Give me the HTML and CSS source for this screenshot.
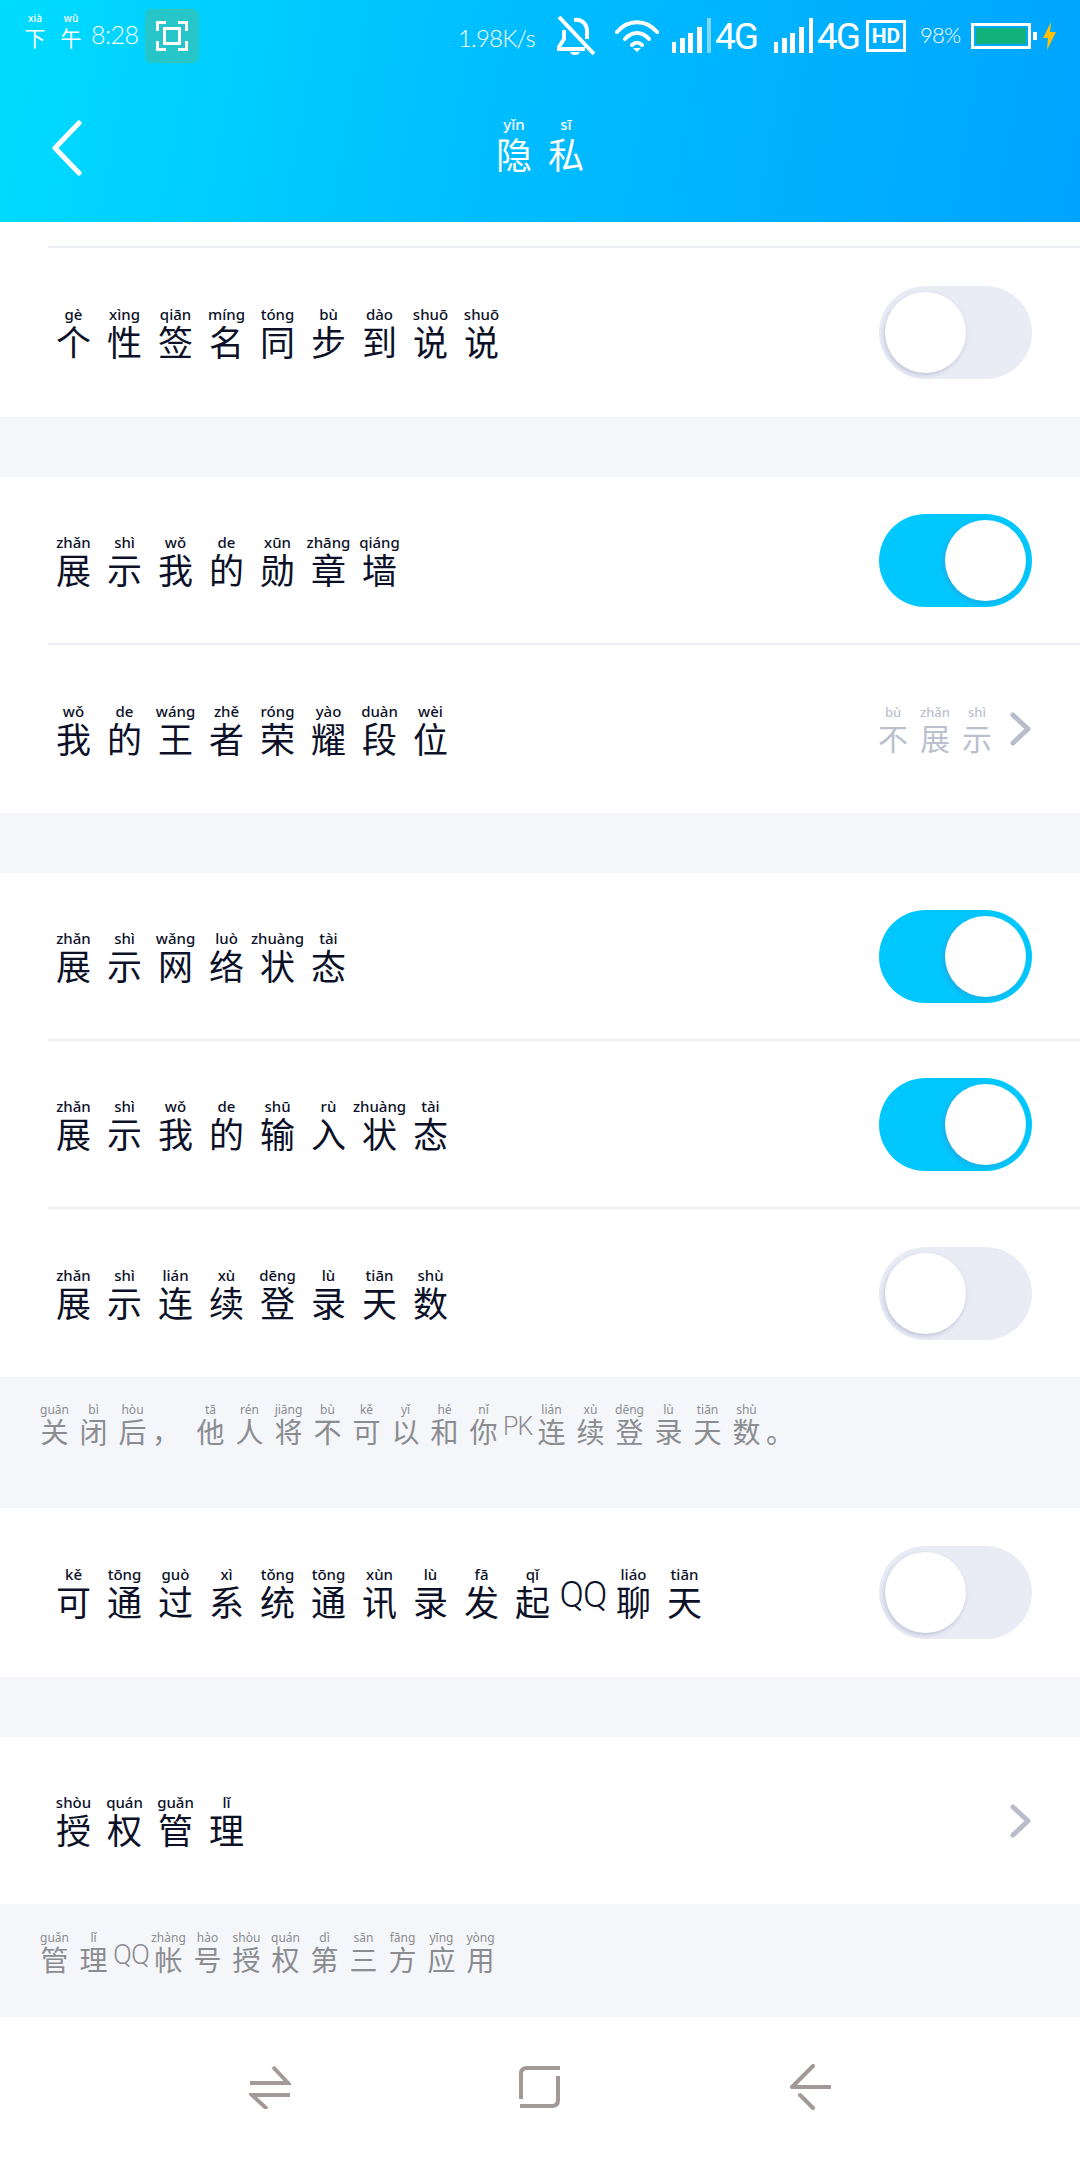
FILE: index.html
```html
<!DOCTYPE html>
<html lang="zh-CN">
<head>
    <meta charset="UTF-8">
    <meta name="viewport" content="width=device-width, initial-scale=1.0">
    <title>隐私</title>
    <link rel="stylesheet" href="styles.css">
</head>
<body>
    <header class="header">
        <div class="status-bar">
            <div class="status-left">
                <div class="line line-status">
                    <ruby>下<rt>xià</rt></ruby>
                    <ruby>午<rt>wǔ</rt></ruby>
                </div>
                <span class="clock">8:28</span>
                <div class="scan-badge">
                    <svg width="32" height="30" viewBox="0 0 32 30" fill="none" stroke="#fff" stroke-width="3">
                        <path d="M1.500 10V1.500H10M22 1.500H30.500V10M30.500 20V28.500H22M10 28.500H1.500V20"/>
                        <rect x="8.500" y="7.500" width="15" height="15"/>
                    </svg>
                </div>
            </div>
            <div class="status-right">
                <span class="speed">1.98K/s</span>
                <svg class="icon-bell" width="38" height="40" viewBox="0 0 38 40" fill="none" stroke="#fff" stroke-width="4">
                    <path d="M2 1L37 38"/>
                    <path d="M7 14V23L2 31V33H28"/>
                    <path d="M17 4C25 3 30 8 30 15V23"/>
                    <path d="M13 36H23C22 40 14 40 13 36Z" fill="#fff" stroke="none"/>
                </svg>
                <svg class="icon-wifi" width="44" height="33" viewBox="0 0 44 33" fill="none" stroke="#fff" stroke-width="4" stroke-linecap="round">
                    <path d="M2 13C13 0 31 0 42 13"/>
                    <path d="M10 20C17 12 27 12 34 20"/>
                    <path d="M17 26C20 23 24 23 27 26"/>
                    <path d="M18 29H26L22 33Z" fill="#fff" stroke="none"/>
                </svg>
                <svg class="icon-signal" width="39" height="35" viewBox="0 0 39 35" fill="#fff">
                    <rect x="0" y="24" width="4" height="11"/>
                    <rect x="8" y="20" width="5" height="15"/>
                    <rect x="16" y="15" width="5" height="20"/>
                    <rect x="25" y="9" width="5" height="26"/>
                    <rect x="35" y="0" width="4" height="35" opacity="0.5"/>
                </svg>
                <span class="net">4G</span>
                <svg class="icon-signal icon-signal-2" width="39" height="35" viewBox="0 0 39 35" fill="#fff">
                    <rect x="0" y="24" width="4" height="11"/>
                    <rect x="8" y="20" width="5" height="15"/>
                    <rect x="16" y="15" width="5" height="20"/>
                    <rect x="25" y="9" width="5" height="26"/>
                    <rect x="35" y="0" width="4" height="35"/>
                </svg>
                <span class="net">4G</span>
                <span class="hd">HD</span>
                <span class="battery-pct">98%</span>
                <div class="battery">
                    <div class="battery-body"><div class="battery-fill"></div></div>
                    <div class="battery-nub"></div>
                </div>
                <svg class="icon-bolt" width="13" height="28" viewBox="0 0 13 28" fill="#ffc107">
                    <path d="M8 0L0 16H5L4 28L13 10H7Z"/>
                </svg>
            </div>
        </div>
        <div class="title-bar">
            <svg class="back" width="30" height="56" viewBox="0 0 30 56" fill="none" stroke="#fff" stroke-width="5" stroke-linecap="round" stroke-linejoin="round">
                <path d="M27 3L3 28L27 53"/>
            </svg>
            <h1 class="line line-title">
                <ruby>隐<rt>yǐn</rt></ruby>
                <ruby>私<rt>sī</rt></ruby>
            </h1>
        </div>
    </header>

    <main>
        <div class="strip"></div>
        <div class="divider"></div>
        <div class="row row-first">
            <div class="line">
                <ruby>个<rt>gè</rt></ruby><ruby>性<rt>xìng</rt></ruby><ruby>签<rt>qiān</rt></ruby><ruby>名<rt>míng</rt></ruby><ruby>同<rt>tóng</rt></ruby><ruby>步<rt>bù</rt></ruby><ruby>到<rt>dào</rt></ruby><ruby>说<rt>shuō</rt></ruby><ruby>说<rt>shuō</rt></ruby>
            </div>
            <div class="switch"></div>
        </div>

        <div class="gap"></div>

        <div class="row">
            <div class="line">
                <ruby>展<rt>zhǎn</rt></ruby><ruby>示<rt>shì</rt></ruby><ruby>我<rt>wǒ</rt></ruby><ruby>的<rt>de</rt></ruby><ruby>勋<rt>xūn</rt></ruby><ruby>章<rt>zhāng</rt></ruby><ruby>墙<rt>qiáng</rt></ruby>
            </div>
            <div class="switch on"></div>
        </div>
        <div class="divider"></div>
        <div class="row row-end">
            <div class="line">
                <ruby>我<rt>wǒ</rt></ruby><ruby>的<rt>de</rt></ruby><ruby>王<rt>wáng</rt></ruby><ruby>者<rt>zhě</rt></ruby><ruby>荣<rt>róng</rt></ruby><ruby>耀<rt>yào</rt></ruby><ruby>段<rt>duàn</rt></ruby><ruby>位<rt>wèi</rt></ruby>
            </div>
            <div class="row-value">
                <div class="line line-value">
                    <ruby>不<rt>bù</rt></ruby><ruby>展<rt>zhǎn</rt></ruby><ruby>示<rt>shì</rt></ruby>
                </div>
                <svg class="chevron" width="24" height="36" viewBox="0 0 24 36" fill="none" stroke="#b9bccb" stroke-width="5" stroke-linecap="round" stroke-linejoin="round">
                    <path d="M5 4L20 18L5 32"/>
                </svg>
            </div>
        </div>

        <div class="gap"></div>

        <div class="row">
            <div class="line">
                <ruby>展<rt>zhǎn</rt></ruby><ruby>示<rt>shì</rt></ruby><ruby>网<rt>wǎng</rt></ruby><ruby>络<rt>luò</rt></ruby><ruby>状<rt>zhuàng</rt></ruby><ruby>态<rt>tài</rt></ruby>
            </div>
            <div class="switch on"></div>
        </div>
        <div class="divider"></div>
        <div class="row">
            <div class="line">
                <ruby>展<rt>zhǎn</rt></ruby><ruby>示<rt>shì</rt></ruby><ruby>我<rt>wǒ</rt></ruby><ruby>的<rt>de</rt></ruby><ruby>输<rt>shū</rt></ruby><ruby>入<rt>rù</rt></ruby><ruby>状<rt>zhuàng</rt></ruby><ruby>态<rt>tài</rt></ruby>
            </div>
            <div class="switch on"></div>
        </div>
        <div class="divider"></div>
        <div class="row row-end">
            <div class="line">
                <ruby>展<rt>zhǎn</rt></ruby><ruby>示<rt>shì</rt></ruby><ruby>连<rt>lián</rt></ruby><ruby>续<rt>xù</rt></ruby><ruby>登<rt>dēng</rt></ruby><ruby>录<rt>lù</rt></ruby><ruby>天<rt>tiān</rt></ruby><ruby>数<rt>shù</rt></ruby>
            </div>
            <div class="switch"></div>
        </div>

        <div class="note note-tall">
            <div class="line line-note">
                <ruby>关<rt>guān</rt></ruby><ruby>闭<rt>bì</rt></ruby><ruby>后<rt>hòu</rt></ruby><span class="mark">，</span><ruby>他<rt>tā</rt></ruby><ruby>人<rt>rén</rt></ruby><ruby>将<rt>jiāng</rt></ruby><ruby>不<rt>bù</rt></ruby><ruby>可<rt>kě</rt></ruby><ruby>以<rt>yǐ</rt></ruby><ruby>和<rt>hé</rt></ruby><ruby>你<rt>nǐ</rt></ruby><span class="latin latin-pk">PK</span><ruby>连<rt>lián</rt></ruby><ruby>续<rt>xù</rt></ruby><ruby>登<rt>dēng</rt></ruby><ruby>录<rt>lù</rt></ruby><ruby>天<rt>tiān</rt></ruby><ruby>数<rt>shù</rt></ruby><span class="mark">。</span>
            </div>
        </div>

        <div class="row row-tall">
            <div class="line">
                <ruby>可<rt>kě</rt></ruby><ruby>通<rt>tōng</rt></ruby><ruby>过<rt>guò</rt></ruby><ruby>系<rt>xì</rt></ruby><ruby>统<rt>tǒng</rt></ruby><ruby>通<rt>tōng</rt></ruby><ruby>讯<rt>xùn</rt></ruby><ruby>录<rt>lù</rt></ruby><ruby>发<rt>fā</rt></ruby><ruby>起<rt>qǐ</rt></ruby><span class="latin">QQ</span><ruby>聊<rt>liáo</rt></ruby><ruby>天<rt>tiān</rt></ruby>
            </div>
            <div class="switch"></div>
        </div>

        <div class="gap"></div>

        <div class="row row-plain">
            <div class="line">
                <ruby>授<rt>shòu</rt></ruby><ruby>权<rt>quán</rt></ruby><ruby>管<rt>guǎn</rt></ruby><ruby>理<rt>lǐ</rt></ruby>
            </div>
            <svg class="chevron" width="24" height="36" viewBox="0 0 24 36" fill="none" stroke="#b9bccb" stroke-width="5" stroke-linecap="round" stroke-linejoin="round">
                <path d="M5 4L20 18L5 32"/>
            </svg>
        </div>

        <div class="note">
            <div class="line line-note">
                <ruby>管<rt>guǎn</rt></ruby><ruby>理<rt>lǐ</rt></ruby><span class="latin">QQ</span><ruby>帐<rt>zhàng</rt></ruby><ruby>号<rt>hào</rt></ruby><ruby>授<rt>shòu</rt></ruby><ruby>权<rt>quán</rt></ruby><ruby>第<rt>dì</rt></ruby><ruby>三<rt>sān</rt></ruby><ruby>方<rt>fāng</rt></ruby><ruby>应<rt>yīng</rt></ruby><ruby>用<rt>yòng</rt></ruby>
            </div>
        </div>
    </main>

    <nav class="nav-bar">
        <svg width="42" height="44" viewBox="0 0 42 44" fill="none" stroke="#a39a98" stroke-width="4">
            <path d="M1 18H39L24 2"/>
            <path d="M41 30H3L18 44"/>
        </svg>
        <svg width="42" height="44" viewBox="0 0 42 44" fill="none" stroke="#a39a98" stroke-width="4">
            <path d="M41 3H8Q2 3 2 9V34"/>
            <path d="M39 11V35Q39 41 33 41H1"/>
        </svg>
        <svg width="42" height="46" viewBox="0 0 42 46" fill="none" stroke="#a39a98" stroke-width="4" stroke-linecap="round" stroke-linejoin="round">
            <path d="M24 2L3 23H41"/>
            <path d="M11 32L24 45" transform="translate(0 -1)"/>
        </svg>
    </nav>
</body>
</html>
```

FILE: styles.css
```css
* {
    box-sizing: border-box;
}
body {
    margin: 0;
    width: 1080px;
    height: 2160px;
    overflow: hidden;
    background-color: #f4f6fa;
    font-family: "Noto Sans CJK SC", "Noto Sans", sans-serif;
    color: #0c1128;
}

/* pinyin lines: one fixed cell per character */
.line {
    display: flex;
    align-items: flex-end;
    --cell: 51px;
    font-size: 35px;
    line-height: 36px;
}
.line ruby {
    display: flex;
    flex-direction: column;
    align-items: center;
    width: var(--cell);
}
.line rt {
    display: block;
    order: -1;
    font-family: "Noto Sans", sans-serif;
    font-size: 15px;
    line-height: 17px;
    font-weight: 500;
    white-space: nowrap;
}
.latin {
    width: 50px;
    font-family: Roboto, sans-serif;
    font-weight: 300;
    font-size: 36px;
    line-height: 48px;
    letter-spacing: -1px;
    text-align: center;
    white-space: nowrap;
}
.mark {
    width: var(--cell);
}

/* header */
.header {
    height: 222px;
    background: linear-gradient(100deg, #00dcff 0%, #00beff 45%, #00a4ff 100%);
    color: #fff;
}
.status-bar {
    display: flex;
    justify-content: space-between;
    height: 63px;
    padding: 9px 24px 0 17px;
}
.status-left {
    display: flex;
    align-items: flex-start;
}
.line-status {
    --cell: 36px;
    font-size: 21px;
    line-height: 26px;
    padding-top: 4px;
}
.line-status rt {
    font-size: 10px;
    line-height: 11px;
}
.clock {
    font-family: "Lato", sans-serif;
    font-weight: 300;
    font-size: 25px;
    line-height: 30px;
    letter-spacing: -0.5px;
    margin: 10px 0 0 2px;
    width: 54px;
}
.scan-badge {
    display: flex;
    align-items: center;
    justify-content: center;
    width: 54px;
    height: 54px;
    border-radius: 6px;
    background-color: #26c6c8;
}
.status-right {
    display: flex;
    align-items: flex-start;
    margin-top: 7px;
}
.speed {
    width: 74px;
    font-family: "Lato", sans-serif;
    font-weight: 300;
    font-size: 24px;
    line-height: 30px;
    letter-spacing: -0.8px;
    margin-top: 7px;
    white-space: nowrap;
}
.icon-bell {
    margin-left: 25px;
}
.icon-wifi {
    margin: 3px 0 0 20px;
}
.icon-signal {
    margin: 2px 0 0 13px;
}
.icon-signal-2 {
    margin-left: 16px;
}
.net {
    width: 43px;
    margin-left: 4px;
    font-family: Roboto, sans-serif;
    font-size: 37px;
    line-height: 36px;
    letter-spacing: -2px;
    margin-top: 3px;
}
.hd {
    width: 40px;
    height: 32px;
    margin: 4px 0 0 6px;
    border: 3px solid #fff;
    font-family: Roboto, sans-serif;
    font-weight: 700;
    font-size: 21px;
    line-height: 26px;
    text-align: center;
}
.battery-pct {
    width: 43px;
    margin: 5px 0 0 14px;
    font-family: "Lato", sans-serif;
    font-weight: 300;
    font-size: 22px;
    line-height: 28px;
    letter-spacing: -0.8px;
    white-space: nowrap;
}
.battery {
    display: flex;
    align-items: center;
    margin: 7px 0 0 8px;
}
.battery-body {
    width: 60px;
    height: 26px;
    padding: 2px;
    border: 3px solid #fff;
}
.battery-fill {
    height: 100%;
    background-color: #12b07a;
}
.battery-nub {
    width: 4px;
    height: 8px;
    margin-left: 2px;
    background-color: #fff;
}
.icon-bolt {
    margin: 6px 0 0 6px;
}
.title-bar {
    display: grid;
    grid-template-columns: 1fr auto 1fr;
    align-items: center;
    height: 159px;
}
.back {
    margin: 10px 0 0 52px;
}
h1 {
    margin: 0;
    padding-top: 3px;
    font-weight: 400;
}
.line-title {
    --cell: 52px;
    font-size: 36px;
    line-height: 40px;
    color: #fff;
}
.line-title rt {
    font-size: 15px;
}

/* rows */
.strip {
    height: 24px;
    background-color: #fff;
}
.divider {
    height: 2px;
    background-color: #fff;
    border-left: 48px solid #fff;
    background-clip: padding-box;
    background-image: linear-gradient(#eceef5, #eceef5);
}
.gap {
    height: 60px;
}
.row {
    display: flex;
    align-items: center;
    justify-content: space-between;
    height: 166px;
    padding: 0 48px;
    background-color: #fff;
}
.row-first {
    height: 169px;
}
.row-end {
    height: 168px;
}
.row-tall {
    height: 169px;
}
.row-plain {
    height: 167px;
}
.switch {
    display: flex;
    width: 153px;
    height: 93px;
    padding: 6px;
    border-radius: 47px;
    background-color: #e9ecf5;
}
.switch::after {
    content: "";
    width: 81px;
    height: 81px;
    border-radius: 50%;
    background-color: #fff;
    box-shadow: -1px 2px 4px rgba(140, 145, 175, 0.45);
}
.switch.on {
    justify-content: flex-end;
    background-color: #00c8ff;
}
.switch.on::after {
    box-shadow: -2px 2px 5px rgba(90, 120, 170, 0.35);
}
.row-value {
    display: flex;
    align-items: center;
    gap: 10px;
}
.line-value {
    --cell: 42px;
    font-size: 30px;
    line-height: 34px;
    color: #bcbfce;
}
.line-value rt {
    font-size: 13px;
    line-height: 15px;
}

/* grey notes under a group */
.note {
    height: 113px;
    padding: 27px 0 0 35px;
}
.note-tall {
    height: 131px;
    padding-top: 26px;
}
.line-note {
    --cell: 39px;
    font-size: 28px;
    line-height: 30px;
    color: #8b8c90;
}
.line-note rt {
    font-size: 12px;
    line-height: 13px;
    font-weight: 400;
}
.line-note .latin {
    width: 36px;
    font-size: 28px;
    line-height: 38px;
}
.line-note .latin-pk {
    width: 29px;
    font-size: 25px;
}

/* navigation bar */
.nav-bar {
    display: flex;
    align-items: center;
    justify-content: center;
    gap: 228px;
    height: 143px;
    padding-bottom: 3px;
    background-color: #fff;
}
```
